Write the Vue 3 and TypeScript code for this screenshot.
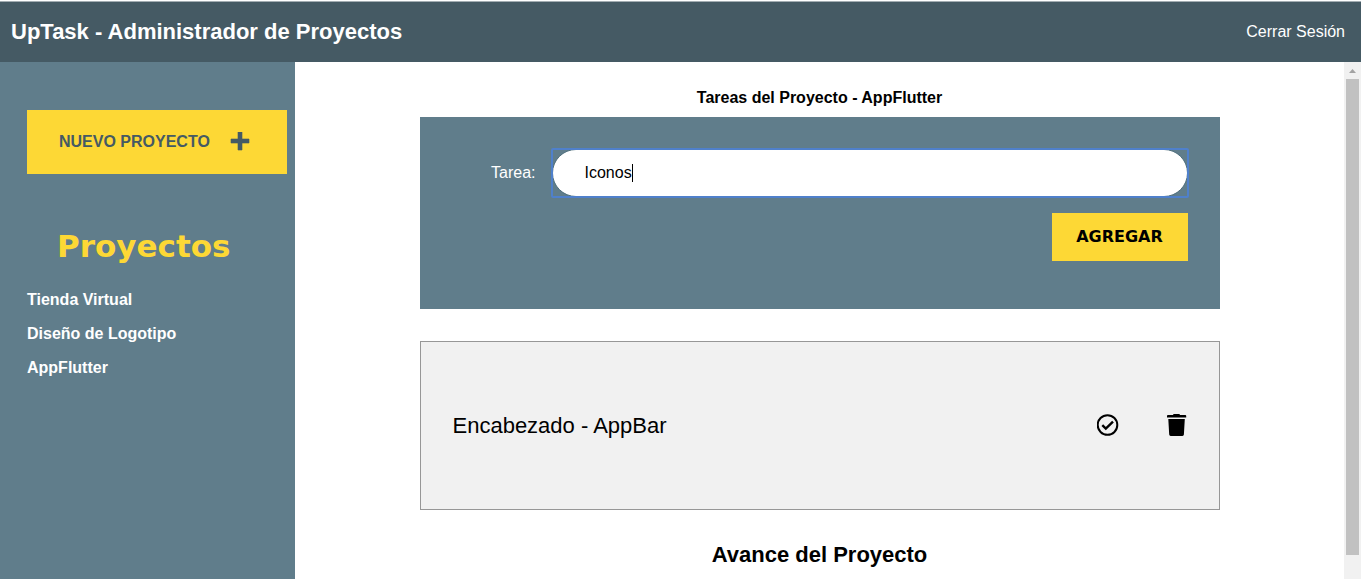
<script setup lang="ts">
import { ref } from 'vue'

interface Task {
  id: number
  name: string
  done: boolean
}

const projects = ref<string[]>(['Tienda Virtual', 'Diseño de Logotipo', 'AppFlutter'])
const current = ref('AppFlutter')
const draft = ref('Iconos')
const tasks = ref<Task[]>([{ id: 1, name: 'Encabezado - AppBar', done: false }])

function addTask() {
  const name = draft.value.trim()
  if (!name) return
  tasks.value.push({ id: Date.now(), name, done: false })
  draft.value = ''
}

function removeTask(id: number) {
  tasks.value = tasks.value.filter((t) => t.id !== id)
}
</script>

<template>
  <div class="page">
    <header class="bar">
      <h1>UpTask - Administrador de Proyectos</h1>
      <a href="#">Cerrar Sesión</a>
    </header>

    <div class="body">
      <aside class="sidebar">
        <button type="button" class="new-project">
          Nuevo Proyecto
          <svg viewBox="0 0 20 20" width="20" height="20" aria-hidden="true">
            <path d="M8 0h4v7h7v4h-7v7H8v-7H1V7h7z" fill="currentColor" stroke="currentColor" stroke-width=".6" />
          </svg>
        </button>
        <h2>Proyectos</h2>
        <ul>
          <li v-for="p in projects" :key="p">
            <a href="#" @click.prevent="current = p">{{ p }}</a>
          </li>
        </ul>
      </aside>

      <main class="content">
        <div class="column">
          <h2 class="heading">Tareas del Proyecto - {{ current }}</h2>

          <form class="task-form" @submit.prevent="addTask">
            <div class="row">
              <label for="task">Tarea:</label>
              <div class="field">
                <input id="task" v-model="draft" type="text" autocomplete="off" />
                <span v-if="draft === 'Iconos'" class="caret" aria-hidden="true"></span>
              </div>
            </div>
            <button type="submit" class="add">Agregar</button>
          </form>

          <ul class="tasks">
            <li v-for="t in tasks" :key="t.id">
              <p>{{ t.name }}</p>
              <div class="actions">
                <button type="button" aria-label="Completar" @click="t.done = !t.done">
                  <svg viewBox="0 0 22 24" width="22" height="24" aria-hidden="true">
                    <circle cx="10.5" cy="11" r="9.8" fill="none" stroke="currentColor" stroke-width="2" />
                    <path d="M5.3 11.2l3.5 3.4 7.200-7" fill="none" stroke="currentColor" stroke-width="2.4" />
                  </svg>
                </button>
                <button type="button" aria-label="Eliminar" @click="removeTask(t.id)">
                  <svg viewBox="0 0 20 24" width="20" height="24" aria-hidden="true">
                    <path
                      d="M.6 1H6l.6-1h5.800l.6 1h5.600l.6.700V3.500H0V1.700zM1.300 5h16.500l-.9 15.600a1.500 1.500 0 0 1-1.500 1.400H3.700a1.500 1.500 0 0 1-1.500-1.400z"
                      fill="currentColor"
                    />
                  </svg>
                </button>
              </div>
            </li>
          </ul>

          <h2 class="progress-title">Avance del Proyecto</h2>
        </div>
      </main>

      <div class="scrollbar" aria-hidden="true">
        <svg viewBox="0 0 17 17" width="17" height="17"><path d="M8.5 7L12 11H5z" fill="#a3a3a3" /></svg>
        <div class="thumb"></div>
      </div>
    </div>
  </div>
</template>

<style>
body {
  margin: 0;
}
</style>

<style scoped>
.page {
  display: flex;
  flex-direction: column;
  height: 100vh;
  overflow: hidden;
  box-sizing: border-box;
  border-top: 1px solid #fff;
  background: #fff;
  color: #000;
  font: 16px/24px 'Liberation Sans', Arial, sans-serif;
}

h1,
h2,
p,
ul {
  margin: 0;
  padding: 0;
}

ul {
  list-style: none;
}

a {
  color: #fff;
  text-decoration: none;
}

button {
  font: inherit;
  border: 0;
  border-radius: 0;
  cursor: pointer;
}

svg {
  display: block;
}

.bar {
  display: flex;
  flex: none;
  justify-content: space-between;
  align-items: center;
  height: 60px;
  padding: 0 16px 0 11px;
  border-top: 1px solid #a3adb2;
  background: #455a64;
}

.bar h1 {
  color: #fff;
  font-size: 22px;
  font-weight: 700;
}

.body {
  display: flex;
  flex: 1;
  min-height: 0;
}

.sidebar {
  flex: none;
  width: 295px;
  box-sizing: border-box;
  padding: 48px 8px 0 27px;
  background: #607d8b;
}

.new-project {
  display: flex;
  align-items: center;
  gap: 20px;
  width: 100%;
  height: 64px;
  padding: 0 32px;
  background: #fdd835;
  color: #455a64;
  font-weight: 700;
  text-transform: uppercase;
}

.sidebar h2 {
  margin-top: 48px;
  padding-left: 30px;
  color: #fdd835;
  font: 700 31px/48px 'DejaVu Sans', 'Arial Black', sans-serif;
}

.sidebar ul {
  margin-top: 13px;
}

.sidebar li {
  height: 34px;
  font-weight: 700;
  line-height: 34px;
}

.content {
  flex: 1;
  min-width: 0;
  overflow: hidden;
}

.column {
  width: 800px;
  max-width: 100%;
  margin: 0 auto;
  padding-top: 24px;
}

.heading {
  margin-bottom: 7px;
  font-size: 16px;
  line-height: 24px;
  text-align: center;
}

.task-form {
  display: flex;
  flex-direction: column;
  gap: 16px;
  padding: 32px 32px 48px;
  background: #607d8b;
}

.row {
  display: flex;
  align-items: center;
}

.row label {
  width: 100px;
  box-sizing: border-box;
  padding-right: 16px;
  color: #fff;
  text-align: right;
}

.field {
  position: relative;
  flex: 1;
}

.field input {
  display: block;
  width: 100%;
  height: 48px;
  box-sizing: border-box;
  padding: 0 32px;
  border: 1px solid #4f6f7e;
  border-radius: 24px;
  outline: none;
  background: #fff;
  color: #000;
  caret-color: transparent;
  font: inherit;
}

.field::before {
  content: '';
  position: absolute;
  inset: -1px;
  border: 2px solid #4f80cb;
  border-radius: 2px;
  pointer-events: none;
}

.caret {
  position: absolute;
  top: 15px;
  left: 80px;
  width: 1px;
  height: 18px;
  background: #000;
}

.add {
  align-self: flex-end;
  min-width: 136px;
  height: 48px;
  padding: 0 24px;
  background: #fdd835;
  color: #000;
  font-family: 'DejaVu Sans', 'Arial Black', sans-serif;
  font-weight: 700;
  text-transform: uppercase;
}

.tasks {
  margin-top: 32px;
}

.tasks li {
  display: flex;
  justify-content: space-between;
  align-items: center;
  height: 169px;
  box-sizing: border-box;
  padding: 0 32px;
  border: 1px solid #979797;
  background: #f1f1f1;
}

.tasks p {
  font-size: 22px;
}

.actions {
  display: flex;
  gap: 48px;
}

.actions button {
  padding: 0;
  background: none;
  color: #000;
}

.progress-title {
  margin-top: 33px;
  font-size: 22px;
  text-align: center;
}

.scrollbar {
  flex: none;
  width: 17px;
  background: #f1f1f1;
}

.thumb {
  height: 92%;
  margin: 0 2px;
  background: #c1c1c1;
}
</style>
